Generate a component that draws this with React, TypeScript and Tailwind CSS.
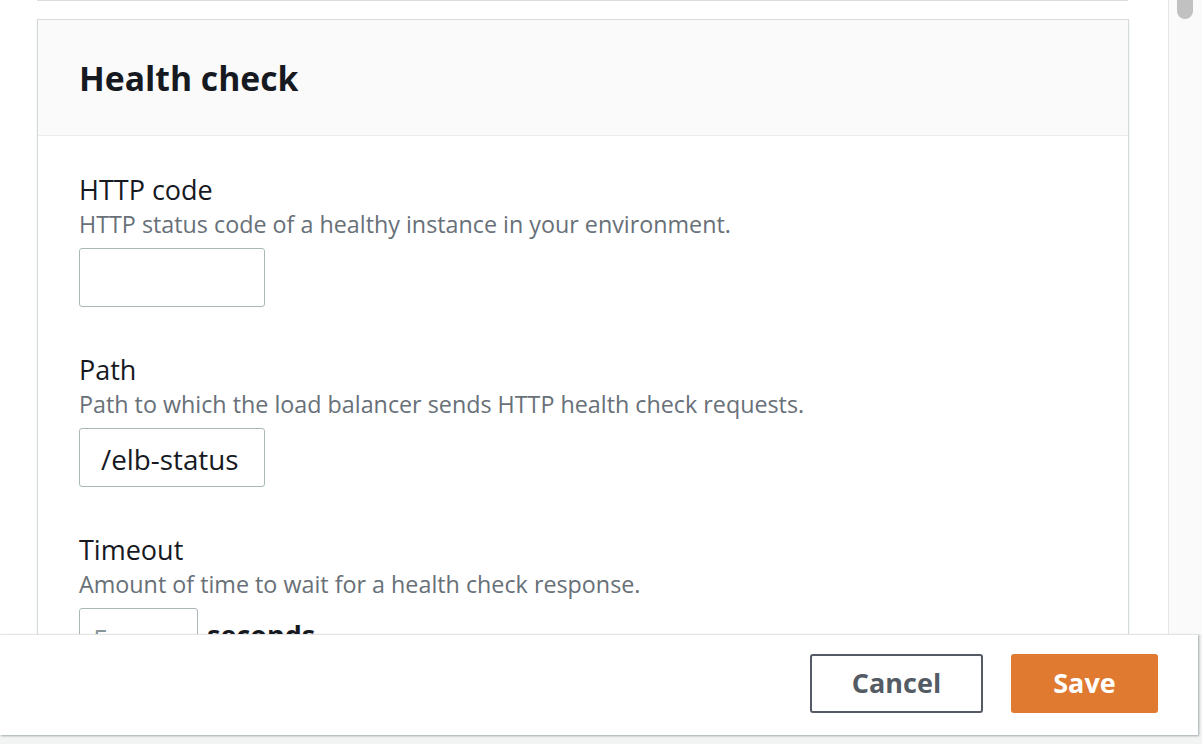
import React from 'react';

const font = { fontFamily: '"Open Sans", "Noto Sans", Arial, sans-serif' };

function Field({
  label,
  hint,
  children,
}: {
  label: string;
  hint: string;
  children: React.ReactNode;
}) {
  return (
    <div className="mb-[45px]">
      <div className="text-[27px] leading-[36px] text-[#16191f]">{label}</div>
      <div className="text-[23.3px] leading-[32px] text-[#687078]">{hint}</div>
      <div className="mt-[8px] flex items-center">{children}</div>
    </div>
  );
}

export default function App() {
  return (
    <div className="relative h-[744px] w-[1202px] overflow-hidden bg-[#f2f3f3]" style={font}>
      {/* scrolling body */}
      <div className="flex h-[634px] w-[1202px] bg-white">
        <div className="h-full w-[1168px] overflow-hidden">
          {/* bottom edge of the previous card */}
          <div className="mx-[37px] h-[1px] w-[1091px] bg-[#d9dddd]" />

          <section className="mt-[18px] ml-[37px] w-[1092px] border border-[#d5dbdb] bg-white shadow-[0_1px_1px_0_rgba(0,28,36,0.2)]">
            <div className="flex h-[116px] items-center border-b border-[#eaeded] bg-[#fafafa] px-[41px] pt-[2px]">
              <h2 className="text-[33.7px] font-bold leading-none text-[#16191f]">Health check</h2>
            </div>

            <div className="px-[41px] pt-[36px]">
              <Field label="HTTP code" hint="HTTP status code of a healthy instance in your environment.">
                <div className="h-[59px] w-[186px] rounded-[3px] border border-[#aab7b8] bg-white" />
              </Field>

              <Field label="Path" hint="Path to which the load balancer sends HTTP health check requests.">
                <div className="flex h-[59px] w-[186px] items-center rounded-[3px] border border-[#aab7b8] bg-white px-[21px] pt-[4px] text-[27.8px] text-[#16191f]">
                  /elb-status
                </div>
              </Field>

              <Field label="Timeout" hint="Amount of time to wait for a health check response.">
                <div className="flex h-[59px] w-[119px] items-center rounded-[3px] border border-[#aab7b8] bg-white px-[13px] pt-[4px] text-[27.8px] text-[#879596]">
                  5
                </div>
                <span className="ml-[9px] pb-[6px] text-[27px] font-bold leading-[40px] text-[#16191f]">seconds</span>
              </Field>
            </div>
          </section>
        </div>

        {/* scrollbar */}
        <div className="relative h-full w-[34px] border-l border-[#e6e6e6] bg-[#fafafa]">
          <div className="absolute left-[8px] top-0 h-[19px] w-[16px] rounded-b-full bg-[#c1c1c1]" />
        </div>
      </div>

      {/* footer */}
      <footer className="absolute left-0 top-[634px] flex h-[101px] w-[1198px] items-start justify-end gap-[28px] border-t border-[#e4e6e6] bg-white pr-[40px] pt-[19px] shadow-[1px_1px_2px_0_rgba(0,28,36,0.35)]">
        <button className="h-[59px] w-[173px] rounded-[3px] border-2 border-[#545b64] bg-white text-[27px] font-bold text-[#545b64]">
          Cancel
        </button>
        <button className="h-[59px] w-[147px] rounded-[3px] bg-[#df7a30] text-[27px] font-bold text-white">
          Save
        </button>
      </footer>
    </div>
  );
}
